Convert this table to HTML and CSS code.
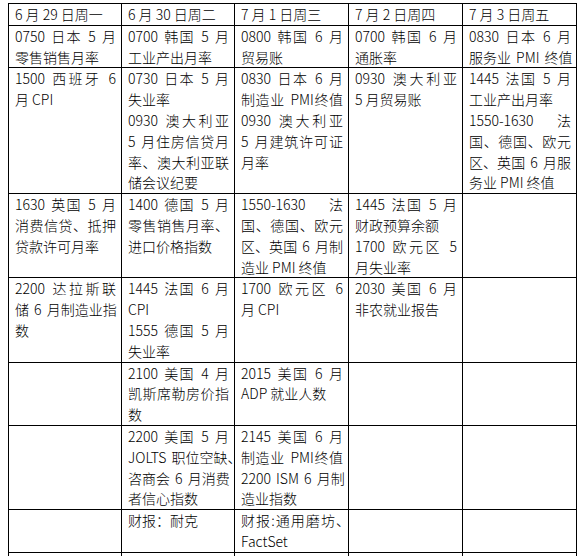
FILE: index.html
```html
<!DOCTYPE html>
<html lang="zh-CN">
<head>
<meta charset="utf-8">
<title>财经日历</title>
<link rel="stylesheet" href="styles.css">
</head>
<body>
<table class="cal">
  <colgroup>
    <col class="c1"><col class="c2"><col class="c3"><col class="c4"><col class="c5">
  </colgroup>
  <thead>
    <tr>
      <th>6 月 29 日周一</th>
      <th>6 月 30 日周二</th>
      <th>7 月 1 日周三</th>
      <th>7 月 2 日周四</th>
      <th>7 月 3 日周五</th>
    </tr>
  </thead>
  <tbody>
    <tr>
      <td><span class="j">0750 日本 5 月</span><span class="e">零售销售月率</span></td>
      <td><span class="j">0700 韩国 5 月</span><span class="e">工业产出月率</span></td>
      <td><span class="j">0800 韩国 6 月</span><span class="e">贸易账</span></td>
      <td><span class="j">0700 韩国 6 月</span><span class="e">通胀率</span></td>
      <td><span class="j">0830 日本 6 月</span><span class="j">服务业 PMI 终值</span></td>
    </tr>
    <tr>
      <td><span class="j">1500 西班牙 6</span><span class="e">月 CPI</span></td>
      <td><span class="j">0730 日本 5 月</span><span class="e">失业率</span><span class="j">0930 澳大利亚</span><span class="j">5 月住房信贷月</span><span class="j">率、澳大利亚联</span><span class="e">储会议纪要</span></td>
      <td><span class="j">0830 日本 6 月</span><span class="j">制造业 PMI终值</span><span class="j">0930 澳大利亚</span><span class="j">5 月建筑许可证</span><span class="e">月率</span></td>
      <td><span class="j">0930 澳大利亚</span><span class="e">5 月贸易账</span></td>
      <td><span class="j">1445 法国 5 月</span><span class="e">工业产出月率</span><span class="j">1550-1630 法</span><span class="j">国、德国、欧元</span><span class="j">区、英国 6 月服</span><span class="e">务业 PMI 终值</span></td>
    </tr>
    <tr>
      <td><span class="j">1630 英国 5 月</span><span class="j">消费信贷、抵押</span><span class="e">贷款许可月率</span></td>
      <td><span class="j">1400 德国 5 月</span><span class="j">零售销售月率、</span><span class="e">进口价格指数</span></td>
      <td><span class="j">1550-1630 法</span><span class="j">国、德国、欧元</span><span class="j">区、英国 6 月制</span><span class="e">造业 PMI 终值</span></td>
      <td><span class="j">1445 法国 5 月</span><span class="e">财政预算余额</span><span class="j">1700 欧元区 5</span><span class="e">月失业率</span></td>
      <td></td>
    </tr>
    <tr>
      <td><span class="j">2200 达拉斯联</span><span class="j">储 6 月制造业指</span><span class="e">数</span></td>
      <td><span class="j">1445 法国 6 月</span><span class="e">CPI</span><span class="j">1555 德国 5 月</span><span class="e">失业率</span></td>
      <td><span class="j">1700 欧元区 6</span><span class="e">月 CPI</span></td>
      <td><span class="j">2030 美国 6 月</span><span class="e">非农就业报告</span></td>
      <td></td>
    </tr>
    <tr>
      <td></td>
      <td><span class="j">2100 美国 4 月</span><span class="j">凯斯席勒房价指</span><span class="e">数</span></td>
      <td><span class="j">2015 美国 6 月</span><span class="e">ADP 就业人数</span></td>
      <td></td>
      <td></td>
    </tr>
    <tr>
      <td></td>
      <td><span class="j">2200 美国 5 月</span><span class="j">JOLTS 职位空缺<span class="h">、</span></span><span class="j">咨商会 6 月消费</span><span class="e">者信心指数</span></td>
      <td><span class="j">2145 美国 6 月</span><span class="j">制造业 PMI终值</span><span class="j">2200 ISM 6 月制</span><span class="e">造业指数</span></td>
      <td></td>
      <td></td>
    </tr>
    <tr>
      <td></td>
      <td><span class="e">财报：耐克</span></td>
      <td><span class="j">财报:通用磨坊<span class="h">、</span></span><span class="e">FactSet</span></td>
      <td></td>
      <td></td>
    </tr>
    <tr class="tail">
      <td></td><td></td><td></td><td></td><td></td>
    </tr>
  </tbody>
</table>
</body>
</html>
```
FILE: styles.css
```css
html, body {
  background: #ffffff;
}
body {
  margin: 3px 0 0 8px;
  font-family: "Noto Sans CJK SC", "Noto Sans", sans-serif;
  font-size: 14px;
  font-weight: 300;
  color: #000000;
}
.cal {
  border-collapse: collapse;
  table-layout: fixed;
  width: 569px;
}
.c1 { width: 113px; }
.c2 { width: 113px; }
.c3 { width: 114px; }
.c4 { width: 114px; }
.c5 { width: 114px; }
.cal th,
.cal td {
  border: 1px solid #000000;
  padding: 0 5px 0 6px;
  vertical-align: top;
  text-align: left;
  font-weight: 300;
  line-height: 20.8px;
  white-space: nowrap;
  overflow: hidden;
}
.cal th {
  height: 20px;
}
.j {
  display: block;
  text-align: justify;
  text-align-last: justify;
  word-spacing: 2px;
}
.e {
  display: block;
  text-align: left;
}
.h {
  font-feature-settings: "halt" 1;
}
.tail td {
  height: 20px;
}
```
